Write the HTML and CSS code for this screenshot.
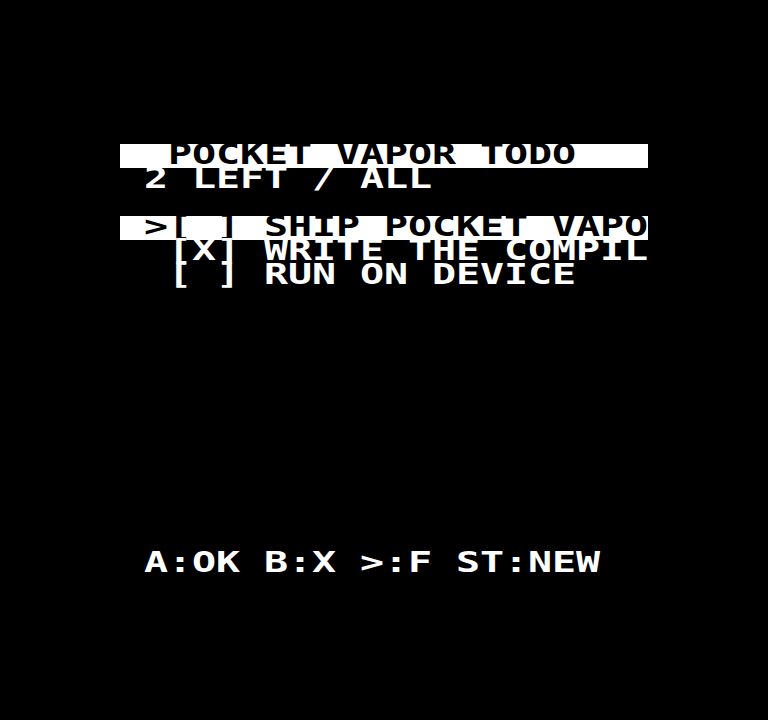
FILE: index.html
```html
<!DOCTYPE html>
<html>
<head>
<meta charset="utf-8">
<link rel="stylesheet" href="styles.css">
</head>
<body>
<div class="screen">
  <div class="term">
    <div class="line inv"><span class="t">  POCKET VAPOR TODO</span></div>
    <div class="line"><span class="t"> 2 LEFT / ALL</span></div>
    <div class="line"><span class="t"> </span></div>
    <div class="line inv"><span class="t"> &gt;[ ] SHIP POCKET VAPO</span></div>
    <div class="line"><span class="t">  [X] WRITE THE COMPIL</span></div>
    <div class="line"><span class="t">  [ ] RUN ON DEVICE</span></div>
    <div class="line footer"><span class="t"> A:OK B:X &gt;:F ST:NEW</span></div>
  </div>
</div>
</body>
</html>
```
FILE: styles.css
```css
html, body {
  margin: 0;
  padding: 0;
  background: #000;
}
.screen {
  width: 768px;
  height: 720px;
  background: #000;
  overflow: hidden;
}
.term {
  padding-top: 144px;
  padding-left: 120px;
  width: 528px;
}
.line {
  height: 24px;
  white-space: pre;
  color: #fff;
}
.t {
  display: inline-block;
  vertical-align: top;
  font-family: "DejaVu Sans Mono", monospace;
  font-weight: bold;
  font-size: 40px;
  line-height: 31px;
  letter-spacing: -0.08px;
  transform: scaleY(0.7);
  transform-origin: 0 0;
}
.inv {
  background: #fff;
  color: #000;
}
.footer {
  margin-top: 264px;
}
```
